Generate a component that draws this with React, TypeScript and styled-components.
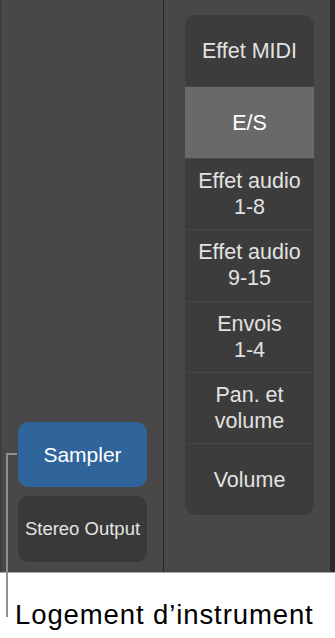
import { FC } from "react";
import styled, { createGlobalStyle } from "styled-components";

const GlobalStyle = createGlobalStyle`
  html, body {
    margin: 0;
    padding: 0;
    background: #ffffff;
  }
  body {
    font-family: "Liberation Sans", Arial, sans-serif;
  }
`;

const Page = styled.div`
  position: relative;
  width: 335px;
  height: 638px;
  overflow: hidden;
  background: #ffffff;
`;

const Mixer = styled.div`
  display: grid;
  grid-template-columns: 163px 1px 166px 5px;
  height: 572px;
  background: #484848;
  border-bottom: 1px solid #a8a8a8;
`;

const Strip = styled.div`
  display: flex;
  flex-direction: column;
  justify-content: flex-end;
  gap: 9px;
  padding: 0 16px 10px 17px;
  border-left: 1px solid #3a3a3a;
`;

const Divider = styled.div`
  background: #262626;
`;

const EdgeShade = styled.div`
  background: #2b2b2b;
`;

const SlotButton = styled.div<{ $active?: boolean; $small?: boolean }>`
  display: flex;
  align-items: center;
  justify-content: center;
  height: ${(p) => (p.$active ? 65 : 66)}px;
  border-radius: 11px;
  background: ${(p) => (p.$active ? "#2f659b" : "#393939")};
  color: ${(p) => (p.$active ? "#ffffff" : "#e4e4e4")};
  font-size: ${(p) => (p.$small ? 18.5 : 21)}px;
`;

const RightColumn = styled.div`
  padding: 15px 16px 0 21px;
`;

const Card = styled.div`
  display: flex;
  flex-direction: column;
  width: 129px;
  border-radius: 11px;
  overflow: hidden;
  background: #3c3c3c;
`;

const Cell = styled.div<{ $selected?: boolean }>`
  box-sizing: border-box;
  display: flex;
  align-items: center;
  justify-content: center;
  height: 71.4px;
  text-align: center;
  font-size: 21.5px;
  line-height: 26px;
  color: ${(p) => (p.$selected ? "#ffffff" : "#e2e2e2")};
  background: ${(p) => (p.$selected ? "#696969" : "transparent")};
  & + & {
    border-top: 1px solid #474747;
  }
`;

const CalloutLine = styled.div`
  position: absolute;
  left: 6px;
  top: 453px;
  width: 11px;
  height: 164px;
  border-left: 2px solid #8f8f8f;
  border-top: 2px solid #8f8f8f;
  box-sizing: border-box;
`;

const Caption = styled.div`
  padding: 26px 0 0 15px;
  font-size: 27.5px;
  letter-spacing: 0.9px;
  color: #000000;
  line-height: 32px;
`;

const sections = [
  ["Effet MIDI"],
  ["E/S"],
  ["Effet audio", "1-8"],
  ["Effet audio", "9-15"],
  ["Envois", "1-4"],
  ["Pan. et", "volume"],
  ["Volume"],
];

const App: FC = () => {
  return (
    <Page>
      <GlobalStyle />
      <Mixer>
        <Strip>
          <SlotButton $active>Sampler</SlotButton>
          <SlotButton $small>Stereo Output</SlotButton>
        </Strip>
        <Divider />
        <RightColumn>
          <Card>
            {sections.map((lines, i) => (
              <Cell key={i} $selected={i === 1}>
                <span>
                  {lines.map((l, j) => (
                    <div key={j}>{l}</div>
                  ))}
                </span>
              </Cell>
            ))}
          </Card>
        </RightColumn>
        <EdgeShade />
      </Mixer>
      <Caption>Logement d’instrument</Caption>
      <CalloutLine />
    </Page>
  );
};

export default App;
